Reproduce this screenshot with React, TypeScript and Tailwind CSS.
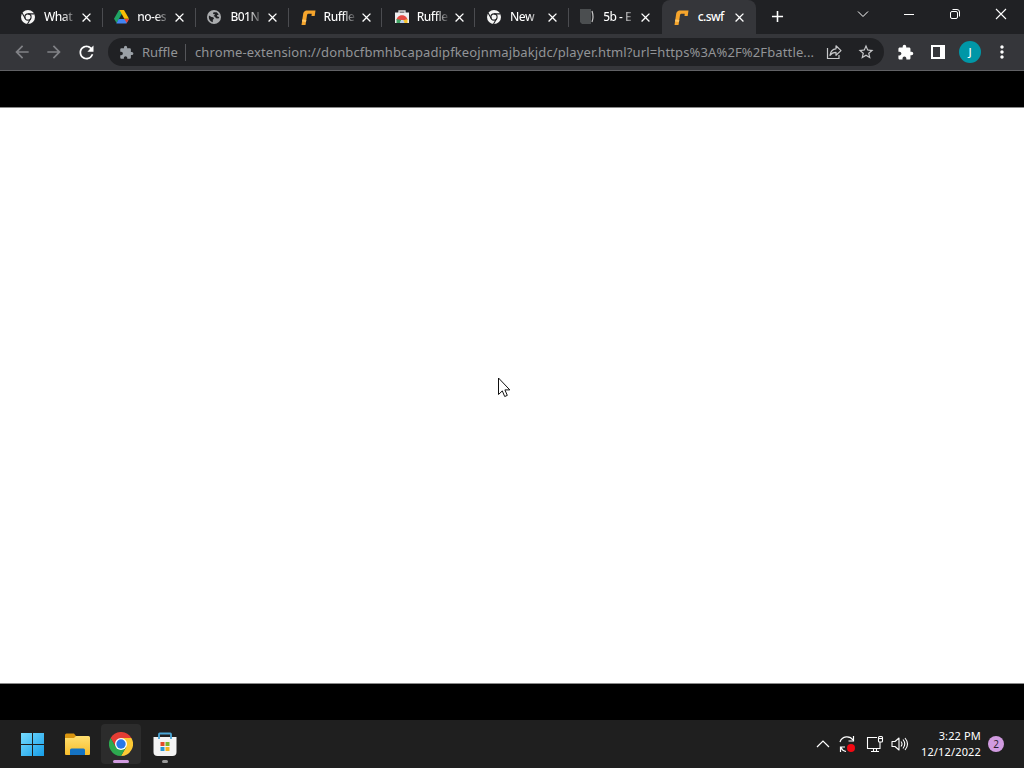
import type { ReactNode } from 'react'
import {
  MdAdd,
  MdArrowBack,
  MdArrowForward,
  MdClose,
  MdExtension,
  MdMoreVert,
  MdRefresh,
  MdStarBorder,
} from 'react-icons/md'

interface Tab {
  title: string
  icon: ReactNode
}

const tabs: Tab[] = [
  { title: 'What', icon: <ChromeMonoIcon /> },
  { title: 'no-es', icon: <DriveIcon /> },
  { title: 'B01N', icon: <GlobeIcon /> },
  { title: 'Ruffle', icon: <RuffleIcon /> },
  { title: 'Ruffle', icon: <WebStoreIcon /> },
  { title: 'New', icon: <ChromeMonoIcon /> },
  { title: '5b - E', icon: <DocIcon /> },
]

export default function App() {
  return (
    <div className="relative flex h-[768px] w-[1024px] flex-col overflow-hidden bg-black font-['Noto_Sans','Open_Sans',sans-serif] text-white">
      <TabStrip />
      <Toolbar />
      <main className="flex h-[649px] flex-col bg-black pt-9">
        <div className="h-[577px] border-y border-[#8a8a8a] bg-white" />
      </main>
      <Taskbar />
      <Cursor />
    </div>
  )
}

function TabStrip() {
  return (
    <header className="flex h-[34px] shrink-0 bg-[#202124] pl-[9.5px]">
      {tabs.map((tab, index) => (
        <div key={index} className="flex w-[93.2px] shrink-0 items-center pl-[11.5px]">
          <div className="flex w-[23px] shrink-0 items-center">{tab.icon}</div>
          <div className="w-[31px] shrink-0 whitespace-nowrap bg-linear-to-r from-white from-60% to-white/15 bg-clip-text text-[12px] leading-5 font-medium tracking-[-0.5px] text-transparent">
            {tab.title}
          </div>
          <MdClose size={15} className="ml-[4px] shrink-0" />
          {index < tabs.length - 1 && <div className="ml-auto h-[19px] w-px bg-[#4b4c50]" />}
        </div>
      ))}

      <div className="flex w-[94px] shrink-0 items-center rounded-t-lg bg-[#35363a] pl-[12px]">
        <div className="w-[24px] shrink-0">
          <RuffleIcon />
        </div>
        <div className="w-[31px] shrink-0 whitespace-nowrap text-[12px] leading-5 font-medium tracking-[-0.6px]">
          c.swf
        </div>
        <MdClose size={15} className="ml-[3px] shrink-0" />
      </div>
      <MdAdd size={19} className="ml-3 mt-[7px] shrink-0" />

      <div className="ml-auto flex shrink-0 gap-[26px] pr-[13px] pt-[4px]">
        <svg width="20" height="20" viewBox="0 0 20 20" fill="none" stroke="currentColor">
          <path d="m5 7.5 5 5 5-5" />
        </svg>
        <svg width="20" height="20" viewBox="0 0 20 20" fill="none" stroke="currentColor">
          <path d="M5 10.5h10" />
        </svg>
        <svg width="20" height="20" viewBox="0 0 20 20" fill="none" stroke="currentColor">
          <rect x="5.5" y="7.5" width="7" height="7" rx="1.5" />
          <path d="M7.5 5.5H12a2.5 2.5 0 0 1 2.5 2.5v4.5" />
        </svg>
        <svg width="20" height="20" viewBox="0 0 20 20" fill="none" stroke="currentColor" strokeWidth="1.1">
          <path d="m5 5 10 10M15 5 5 15" />
        </svg>
      </div>
    </header>
  )
}

function Toolbar() {
  return (
    <div className="flex h-[37px] shrink-0 items-center border-b border-[#606164] bg-[#35363a] pl-[12px]">
      <MdArrowBack size={20} className="text-[#818286]" />
      <MdArrowForward size={20} className="ml-3 text-[#818286]" />
      <MdRefresh size={21} className="ml-[12px]" />

      <div className="ml-[11px] flex h-7 w-[776px] shrink-0 items-center rounded-full bg-[#202124] pl-[11px] text-[13px] text-[#929497]">
        <MdExtension size={15} className="text-[#9aa0a6]" />
        <span className="ml-[8px] w-[37px] whitespace-nowrap pt-px">Ruffle</span>
        <div className="ml-[6px] h-[17px] w-px bg-[#55565a]" />
        <span className="ml-[9px] w-[620px] whitespace-nowrap pt-px tracking-[0.13px]">
          chrome-extension://donbcfbmhbcapadipfkeojnmajbakjdc/player.html?url=https%3A%2F%2Fbattle...
        </span>
        <svg className="ml-[11px] shrink-0 text-[#c7c8ca]" width="17" height="16" viewBox="0 0 17 16" fill="none" stroke="currentColor" strokeWidth="1.2">
          <path d="M1.5 4v10.5h11.5V11" />
          <path d="M10 1.8v3C6.5 5 4.5 7.500 4 11.300c1.500-2.200 3.300-3 6-3v3l5-4.700z" strokeLinejoin="round" />
        </svg>
        <MdStarBorder size={18} className="ml-[14px] shrink-0 text-[#c7c8ca]" />
      </div>

      <MdExtension size={17} className="ml-[13px] shrink-0" />
      <svg className="ml-[17px] shrink-0" width="14" height="14" viewBox="0 0 14 14">
        <path fill="currentColor" fillRule="evenodd" d="M0 0h14v14H0zM2 2v10h7V2z" />
      </svg>
      <div className="ml-[14px] flex size-[22px] shrink-0 items-center justify-center rounded-full bg-[#0097a7] text-[11px] font-medium">
        J
      </div>
      <MdMoreVert size={20} className="ml-[11px] shrink-0" />
    </div>
  )
}

function Taskbar() {
  return (
    <footer className="flex h-12 shrink-0 bg-[#1f1f1f] pl-[13px]">
      <div className="flex w-11 items-center pl-2">
        <svg width="23" height="23" viewBox="0 0 23 23">
          <defs>
            <linearGradient id="win" x1="0" y1="0" x2="1" y2="1">
              <stop stopColor="#76dcff" />
              <stop offset="1" stopColor="#169de8" />
            </linearGradient>
          </defs>
          <path fill="url(#win)" d="M0 0h11v11H0zM12 0h11v11H12zM0 12h11v11H0zM12 12h11v11H12z" />
        </svg>
      </div>
      <div className="flex w-11 items-center pl-2">
        <FolderIcon />
      </div>
      <div className="mt-1 flex h-10 w-10 flex-col items-center rounded bg-[#2c2c2c] pt-[8px]">
        <ChromeIcon />
        <div className="mt-1 h-[3px] w-4 shrink-0 rounded-full bg-[#d19be0]" />
      </div>
      <div className="flex w-[47px] flex-col items-center pt-[12px]">
        <StoreIcon />
        <div className="mt-[3px] h-[3px] w-[6px] rounded-full bg-[#9a9a9a]" />
      </div>

      <div className="ml-auto flex items-center pr-5">
        <svg width="14" height="10" viewBox="0 0 14 10" fill="none" stroke="currentColor" strokeWidth="1.2">
          <path d="m1 8 6-6 6 6" />
        </svg>
        <svg className="ml-[8px]" width="18" height="18" viewBox="0 0 18 18" fill="none" stroke="currentColor" strokeWidth="1.2">
          <path d="M2 7C4 .5 12 .5 15 5M15.500 1v5H10.500M7 12H2.500v5M3 12.500C4 15 6 16.200 8 16.500" />
          <circle cx="13" cy="13" r="4" fill="#f30812" stroke="none" />
        </svg>
        <svg className="ml-[10px]" width="18" height="18" viewBox="0 0 18 18" fill="none" stroke="currentColor" strokeWidth="1.1">
          <path d="M11 2.500H1.500v11H14V10M5 16.500h8M7.500 13.500v3M10.500 13.500v3M14 7v4" />
          <rect x="12.500" y="1.500" width="4" height="5.500" rx="1" />
          <path d="M12.500 3.500h4" />
        </svg>
        <svg className="ml-[7px]" width="18" height="18" viewBox="0 0 18 18" fill="none" stroke="currentColor" strokeWidth="1.1" strokeLinejoin="round">
          <path d="M1 6.500h3L8 3v12l-4-3.500H1zM10 6.500q2 2.500 0 5M12 4.500q3.500 4.500 0 9M14 3q5 6 0 12" />
        </svg>
        <div className="ml-[11px] w-[61px] text-[11px] leading-4 tracking-[0.15px]">
          <p className="flex justify-end whitespace-nowrap">3:22 PM</p>
          <p className="flex justify-end whitespace-nowrap">12/12/2022</p>
        </div>
        <div className="ml-[7px] flex size-4 items-center justify-center rounded-full bg-[#d19be0] text-[10px] text-[#2b2030]">
          2
        </div>
      </div>
    </footer>
  )
}

function Cursor() {
  return (
    <svg className="absolute left-[498px] top-[377px]" width="13" height="21" viewBox="0 0 13 21">
      <path
        d="M.5 1v16.500l3.800-3.600 2.400 5.600 2.600-1.100-2.400-5.500h4.900z"
        fill="white"
        stroke="#111"
        strokeWidth="1"
      />
    </svg>
  )
}

function ChromeMonoIcon() {
  return (
    <svg width="14" height="14" viewBox="0 0 14 14">
      <circle cx="7" cy="7" r="7" fill="#f5f5f5" />
      <g fill="none" stroke="#202124" strokeWidth="1.1">
        <circle cx="7" cy="7" r="3.1" />
        <path d="M7 3.900h6.500M4.300 8.550 1.100 3M9.700 8.550 6.500 14" />
      </g>
    </svg>
  )
}

function GlobeIcon() {
  return (
    <svg width="14" height="14" viewBox="0 0 14 14">
      <circle cx="7" cy="7" r="7" fill="#aaacae" />
      <path
        fill="#202124"
        d="M2 5.500 4.500 7l1.800.3.700 1.500-1.200 1v2.400C3.300 11.700 1.700 9.500 1.800 7zM6.500 2.200h3.200L11.800 4.500 10 5.300l.3 1.200 2 .5-.8 1.600-2.500-.4L8 6.800 6.500 6l1.800-1.400L6 4z"
      />
    </svg>
  )
}

function RuffleIcon() {
  return (
    <svg width="15" height="17" viewBox="0 0 15 17">
      <path fill="#f6a52c" d="M5 1.500h9.500L13.700 7H10.500l.2-2.200H7.700c-1.200 0-1.500.5-1.700 1.500L4.500 16H.5L2 6C2.300 3.500 3 2.200 5 1.500z" />
      <path fill="#ffc766" d="m1.300 10.500 4 .6-.3 2-4-.6z" />
    </svg>
  )
}

function DriveIcon() {
  return (
    <svg width="15" height="14" viewBox="0 0 15 14">
      <path fill="#20a464" d="M5 0h2.500l1.300 2.300L2.600 13 0 8.700z" />
      <path fill="#fbbc04" d="M5.500 0H10l5 8.700h-4.700z" />
      <path fill="#4285f4" d="M4.700 9H15l-2.500 4.500H2.300z" />
      <path fill="#ea4335" d="M10.300 9H15l-2.300 4z" />
    </svg>
  )
}

function WebStoreIcon() {
  return (
    <svg className="ml-px" width="14" height="14" viewBox="0 0 14 14">
      <path fill="none" stroke="#ddd" strokeWidth="1.300" d="M4 3V1h6v2" />
      <path fill="#eeeeee" d="M0 2.500h14V13H0z" />
      <path fill="#e44a43" d="M1.500 10C2 3.500 12 3.500 12.500 10z" />
      <path fill="#42a566" d="M1.500 9 6 10v3H1.500z" />
      <path fill="#f7c42d" d="M8 10.500 12.500 9v4H7z" />
      <path fill="#b9cdf0" d="M5 13a2.200 2.800 0 0 1 4.400 0z" />
    </svg>
  )
}

function DocIcon() {
  return (
    <svg width="15" height="16" viewBox="0 0 15 16">
      <path fill="#4b4e50" d="M0 0h11v15H2L0 13z" />
      <path fill="none" stroke="#c9c9c9" strokeWidth="1.200" d="M12 2q2 6 0 11" />
    </svg>
  )
}

function FolderIcon() {
  return (
    <svg width="25" height="23" viewBox="0 0 25 23">
      <defs>
        <linearGradient id="folder" x1="0" y1="0" x2="0" y2="1">
          <stop stopColor="#ffdf70" />
          <stop offset="1" stopColor="#f7bd2c" />
        </linearGradient>
      </defs>
      <path fill="#d9940e" d="M0 2q0-1.500 1.500-1.500H9L11 3v4H0z" />
      <path fill="url(#folder)" d="M0 5h9l2-2h12.500Q25 3 25 4.500V21q0 1-1 1H1q-1 0-1-1z" />
      <path fill="#1473c4" d="M5 22v-5q0-1.500 1.500-1.500h12q1.500 0 1.500 1.500v5z" />
    </svg>
  )
}

function ChromeIcon() {
  return (
    <svg className="shrink-0" width="24" height="24" viewBox="0 0 24 24">
      <path fill="#e43d34" d="M1.600 6A12 12 0 0 1 22.400 6H12l-5.200 9z" />
      <path fill="#fcc934" d="M22.400 6A12 12 0 0 1 12 24l5.200-9L12 6z" />
      <path fill="#2da94f" d="M12 24A12 12 0 0 1 1.600 6l5.200 9h10.400z" />
      <circle cx="12" cy="12" r="6" fill="white" />
      <circle cx="12" cy="12" r="4.700" fill="#2878e8" />
    </svg>
  )
}

function StoreIcon() {
  return (
    <svg width="24" height="25" viewBox="0 0 24 25">
      <path fill="#f3f3f3" d="M.5 5h23v15q0 4-4 4h-15q-4 0-4-4z" />
      <path fill="none" stroke="#4ba6d6" strokeWidth="1.800" d="M6 7V2.200q0-.7.700-.7h10.600q.7 0 .7.700V7" />
      <path fill="#e34b29" d="M7.500 10h4v4h-4z" />
      <path fill="#78b42c" d="M12.500 10h4v4h-4z" />
      <path fill="#2696d4" d="M7.500 15h4v4h-4z" />
      <path fill="#f4b31b" d="M12.500 15h4v4h-4z" />
    </svg>
  )
}
